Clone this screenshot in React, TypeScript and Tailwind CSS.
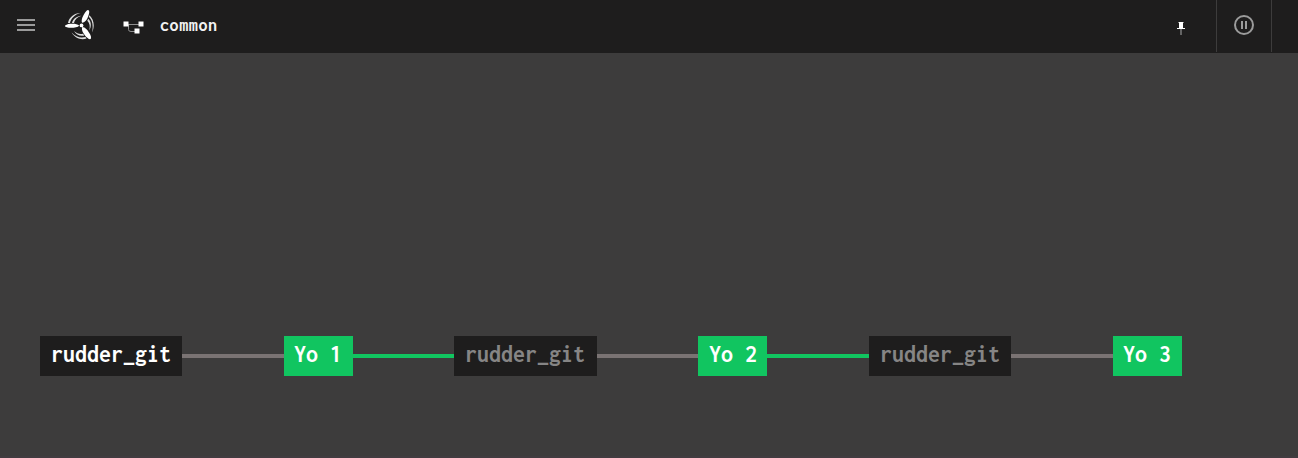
type NodeProps = { label: string; className: string };

const MONO = "font-['Inconsolata','Noto_Sans_Mono_CJK_JP','Liberation_Mono',monospace]";

function PipelineNode({ label, className }: NodeProps) {
  return (
    <div className={`flex h-10 shrink-0 items-center justify-center whitespace-pre pb-[3px] text-[24px] leading-none font-bold ${className}`}>
      {label}
    </div>
  );
}

function Edge({ className }: { className: string }) {
  return <div className={`h-1 shrink-0 ${className}`} />;
}

function Logo() {
  return (
    <svg width="34" height="34" viewBox="0 0 34 34" fill="white" className="shrink-0">
      <circle cx="18.500" cy="17.400" r="1.900" />
      <path d="M16.200 17.400C14.400 15.800 10.500 15.400 7.200 15.800C4.400 16.200 2 17 2 18C2 19.200 5 19.800 8 19.800C11.500 19.800 15 19.200 16.200 17.400Z" />
      <path d="M19.200 14.800C17.900 12.700 19.600 8.600 21.200 6C22.600 3.500 24.300 1.600 25.500 2.200C26.800 2.900 26.200 5.500 25.300 8.100C24.200 11.500 22.300 14.500 19.200 14.800Z" />
      <path d="M19.300 19.100C22 19 24.600 22.200 26.300 25.100C27.900 27.600 28.700 30.200 27.600 31C26.400 31.700 23.800 29.700 22 27.400C19.900 24.900 18.200 21.600 19.300 19.100Z" />
      <g opacity="0.85">
        <path d="M5 15C6 9.500 11 5 17.500 5C11.500 6.500 8 10.500 7 15Z" />
        <path d="M9 15C9.800 11.300 13.500 8 18.500 7.800C14 9.300 11.500 12 11 15Z" />
        <path d="M26.500 7.200C31 11.500 32 18 29 24.500C30.500 18 29.500 12 25.800 8.800Z" />
        <path d="M25.300 10.800C28.500 14 28.600 18.500 26.300 22.500C27.200 18.500 26.800 15 24.300 12.700Z" />
        <path d="M23.500 30.500C18 32.500 12 30 8.500 24.500C13 29 17.500 30.300 22.500 29Z" />
        <path d="M21.300 27.500C17 28.500 13 26.800 11 23C14 25.700 17 26.600 20 25.700Z" />
      </g>
    </svg>
  );
}

export default function App() {
  return (
    <div className={`flex h-[458px] w-full flex-col overflow-hidden bg-[#3d3c3c] text-white ${MONO}`}>
      <header className="flex h-[53px] shrink-0 items-start bg-[#1e1d1d]">
        <svg className="mt-[19px] ml-[17px] shrink-0" width="18" height="12" fill="#9b9b9b">
          <path d="M0 0h18v2H0zM0 5h18v2H0zM0 10h18v2H0z" />
        </svg>
        <div className="mt-2 ml-7">
          <Logo />
        </div>
        <svg className="mt-[21px] ml-[26px] shrink-0" width="22" height="14" fill="none">
          <path d="M3 3.500H18M5.500 3.500V8.500Q5.500 10.500 8 10.500H14" stroke="#8f8f8f" />
          <path d="M0.500 0.500h5v5h-5zM15.500 0.500h5v5h-5zM11.500 7.500h5v5h-5z" fill="white" />
        </svg>
        <div className="mt-[13px] ml-[15px] h-6 text-[18px] leading-6 font-bold tracking-[0.6px] text-[#f2f2f2]">common</div>
        <div className="ml-auto flex h-[52px] w-[121px]">
          <svg className="mt-[22px] shrink-0" width="8" height="13">
            <path d="M3 7h2v6h-2z" fill="#646464" />
            <path d="M2 0h4v6h2v1H0V6h2z" fill="white" />
            <path d="M1 0h1v1H1zM6 0h1v1H6z" fill="#888888" />
          </svg>
          <div className="ml-[31px] flex w-14 items-start justify-center border-x border-[#3d3c3c] pt-[15px]">
            <svg width="20" height="20" fill="none">
              <circle cx="10" cy="10" r="9" stroke="#9b9b9b" strokeWidth="2" />
              <path d="M7 6h2v8H7zM11 6h2v8h-2z" fill="#9b9b9b" />
            </svg>
          </div>
        </div>
      </header>
      <main className="flex flex-1 items-center border-b-2 border-[#413c40] pt-[203px] pl-10 pb-px">
        <div className="flex h-10 items-center">
          <PipelineNode label="rudder_git" className="w-[142px] bg-[#1e1d1d] text-white" />
          <Edge className="w-[102px] bg-[#7a7373]" />
          <PipelineNode label="Yo 1" className="w-[69px] bg-[#11c560] pr-px" />
          <Edge className="w-[101px] bg-[#11c560]" />
          <PipelineNode label="rudder_git" className="w-[143px] bg-[#1e1d1d] pr-px text-[#868585]" />
          <Edge className="w-[101px] bg-[#7a7373]" />
          <PipelineNode label="Yo 2" className="w-[69px] bg-[#11c560] pl-px" />
          <Edge className="w-[102px] bg-[#11c560]" />
          <PipelineNode label="rudder_git" className="w-[142px] bg-[#1e1d1d] text-[#868585]" />
          <Edge className="w-[102px] bg-[#7a7373]" />
          <PipelineNode label="Yo 3" className="w-[69px] bg-[#11c560] pr-px" />
        </div>
      </main>
    </div>
  );
}
